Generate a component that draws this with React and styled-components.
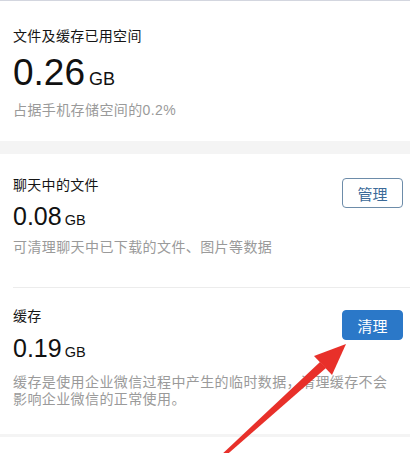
import React from "react";
import styled, { createGlobalStyle } from "styled-components";

const GlobalStyle = createGlobalStyle`
  html, body {
    margin: 0;
    padding: 0;
    background: #ffffff;
  }
  body {
    font-family: "Liberation Sans", "Noto Sans CJK SC", sans-serif;
    color: #161616;
  }
`;

const Page = styled.div`
  position: relative;
  width: 410px;
  height: 453px;
  overflow: hidden;
  border-top: 1px solid #d3d6df;
  box-sizing: border-box;
`;

const Section = styled.div`
  background: #ffffff;
  padding: ${(p) => p.pad};
`;

const Item = styled.div`
  display: grid;
  grid-template-columns: 1fr auto;
  grid-template-areas:
    "title btn"
    "amount btn"
    "desc desc";
  align-items: start;
  background: #ffffff;
  padding: ${(p) => p.pad};
`;

const Gap = styled.div`
  height: ${(p) => p.h}px;
  background: #f4f4f4;
`;

const Divider = styled.div`
  height: 1px;
  margin-left: 13px;
  background: #ececec;
`;

const Title = styled.div`
  grid-area: title;
  font-size: 14px;
  line-height: 20px;
  letter-spacing: 0.3px;
  color: #151515;
`;

const Amount = styled.div`
  grid-area: amount;
  display: flex;
  align-items: baseline;
  gap: ${(p) => (p.big ? 4 : 3)}px;
  margin-top: ${(p) => p.mt}px;
  font-size: ${(p) => (p.big ? 37 : 25)}px;
  line-height: ${(p) => (p.big ? 40 : 30)}px;
  color: #111;
`;

const Unit = styled.span`
  font-size: ${(p) => (p.big ? 18 : 14.5)}px;
  line-height: 1;
`;

const Desc = styled.div`
  grid-area: desc;
  margin-top: ${(p) => p.mt}px;
  padding-right: ${(p) => p.pr || 0}px;
  font-size: 14px;
  line-height: ${(p) => p.lh || 20}px;
  letter-spacing: 0.4px;
  color: #9a9a9a;
`;

const Button = styled.button`
  grid-area: btn;
  width: 61px;
  height: 30px;
  margin-top: ${(p) => p.mt}px;
  padding: 0;
  border-radius: 4px;
  font-family: "Noto Sans CJK SC", sans-serif;
  font-size: 15px;
  border: 1.5px solid ${(p) => (p.primary ? "#2b78c8" : "#6d8ca9")};
  background: ${(p) => (p.primary ? "#2b78c8" : "#ffffff")};
  color: ${(p) => (p.primary ? "#ffffff" : "#3b6a98")};
`;

const Overlay = styled.svg`
  position: absolute;
  left: 0;
  top: 0;
  pointer-events: none;
`;

const Arrow = () => (
  <Overlay width="410" height="453" viewBox="0 0 410 453">
    <polygon points="219,456 222,458 326,367 320,361" fill="#e8302a" />
    <polygon points="346,343 332,374 314,355" fill="#e8302a" />
  </Overlay>
);

export default function App() {
  return (
    <>
      <GlobalStyle />
      <Page>
        <Section pad="25px 13px 21px">
          <Title>文件及缓存已用空间</Title>
          <Amount big mt={7}>
            0.26<Unit big>GB</Unit>
          </Amount>
          <Desc mt={7}>占据手机存储空间的0.2%</Desc>
        </Section>
        <Gap h={13} />
        <Item pad="21px 7px 30px 13px">
          <Title>聊天中的文件</Title>
          <Button mt={3}>管理</Button>
          <Amount mt={6}>
            0.08<Unit>GB</Unit>
          </Amount>
          <Desc mt={6}>可清理聊天中已下载的文件、图片等数据</Desc>
        </Item>
        <Divider />
        <Item pad="18px 7px 26px 13px">
          <Title>缓存</Title>
          <Button primary mt={4}>清理</Button>
          <Amount mt={7}>
            0.19<Unit>GB</Unit>
          </Amount>
          <Desc mt={11} lh={17} pr={12}>
            缓存是使用企业微信过程中产生的临时数据，清理缓存不会影响企业微信的正常使用。
          </Desc>
        </Item>
        <Gap h={3} />
        <Section pad="0" />
        <Arrow />
      </Page>
    </>
  );
}
